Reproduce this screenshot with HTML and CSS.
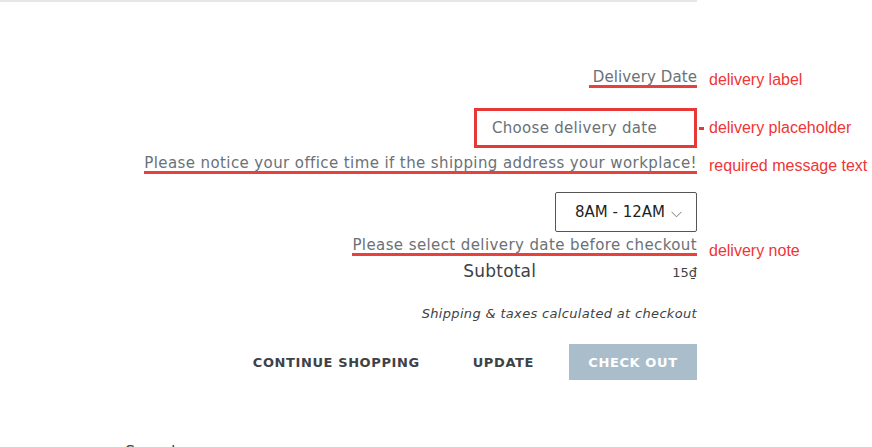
FILE: index.html
```html
<!DOCTYPE html>
<html lang="en">
<head>
<meta charset="utf-8">
<title>Cart</title>
<link rel="stylesheet" href="styles.css">
</head>
<body>
<div class="topline"></div>
<div class="cart">
  <div class="row row-label">
    <div class="cell"><span class="mark mark-pad">Delivery Date</span></div>
    <div class="ann ann-low">delivery label</div>
  </div>
  <div class="row row-date">
    <div class="cell"><div class="date-box">Choose delivery date</div></div>
    <div class="ann"><span class="dash"></span>delivery placeholder</div>
  </div>
  <div class="row row-notice">
    <div class="cell"><span class="mark">Please notice your office time if the shipping address your workplace!</span></div>
    <div class="ann ann-low">required message text</div>
  </div>
  <div class="row row-select">
    <div class="cell">
      <div class="select">
        <span>8AM - 12AM</span>
        <svg class="chev" width="11" height="7" viewBox="0 0 11 7"><path d="M0.5 0.8 L5.5 5.8 L10.5 0.8" fill="none" stroke="#777" stroke-width="1"/></svg>
      </div>
    </div>
    <div class="ann"></div>
  </div>
  <div class="row row-note">
    <div class="cell"><span class="mark">Please select delivery date before checkout</span></div>
    <div class="ann ann-end">delivery note</div>
  </div>
  <div class="row row-subtotal">
    <div class="cell subtotal">
      <span class="sub-label">Subtotal</span>
      <span class="sub-price">15₫</span>
    </div>
  </div>
  <div class="row row-ship">
    <div class="cell"><span class="ship">Shipping &amp; taxes calculated at checkout</span></div>
  </div>
  <div class="row row-buttons">
    <div class="cell actions">
      <button class="btn btn-link">Continue shopping</button>
      <button class="btn btn-link">Update</button>
      <button class="btn btn-primary">Check out</button>
    </div>
  </div>
  <div class="footer-text">Sound</div>
</div>
</body>
</html>
```

FILE: styles.css
```css
html, body {
  margin: 0;
  padding: 0;
  background: #fff;
}
body {
  width: 872px;
  height: 447px;
  overflow: hidden;
  font-family: "DejaVu Sans", sans-serif;
  color: #6b7177;
}
.topline {
  width: 697px;
  height: 2px;
  background: #e6e6e6;
}
.row {
  display: grid;
  grid-template-columns: 697px 1fr;
  align-items: center;
}
.cell {
  display: flex;
  justify-content: flex-end;
  align-items: center;
}
.ann {
  display: flex;
  align-items: center;
  padding-left: 12px;
  font-family: "Liberation Sans", Arial, sans-serif;
  font-size: 16px;
  line-height: 16px;
  color: #ee3636;
  white-space: nowrap;
}
.ann-low { padding-top: 3px; }
.ann-end {
  align-self: end;
  margin-bottom: -3px;
}
.mark {
  display: inline-block;
  font-size: 15px;
  line-height: 16px;
  letter-spacing: 0.4px;
  border-bottom: 3px solid #e8403d;
  color: #6b7177;
  white-space: nowrap;
}
.mark-pad {
  padding-left: 4px;
  letter-spacing: 0.1px;
}

.row-label { margin-top: 67px; }

.row-date { margin-top: 20px; }
.date-box {
  box-sizing: border-box;
  width: 223px;
  height: 40px;
  border: 3px solid #e53935;
  padding-left: 15px;
  display: flex;
  align-items: center;
  font-size: 15px;
  letter-spacing: 0.3px;
  color: #6b7177;
}
.dash {
  display: inline-block;
  width: 5px;
  height: 3px;
  background: #e53935;
  margin-left: -10px;
  margin-right: 5px;
}

.row-notice { margin-top: 7px; }

.row-select { margin-top: 18px; }
.select {
  box-sizing: border-box;
  width: 142px;
  height: 40px;
  border: 1px solid #555;
  border-radius: 2px;
  display: flex;
  align-items: center;
  padding-left: 19px;
  gap: 6px;
  font-size: 15px;
  color: #1f1f1f;
}
.chev { margin-top: 4px; }

.row-note { margin-top: 5px; }

.row-subtotal { margin-top: 5px; }
.subtotal {
  align-items: baseline;
  gap: 136px;
  color: #3d4246;
}
.sub-label {
  font-size: 17px;
  line-height: 20px;
  letter-spacing: 0.2px;
}
.sub-price {
  font-size: 13px;
  line-height: 20px;
}

.row-ship { margin-top: 23px; }
.ship {
  font-size: 13px;
  line-height: 16px;
  letter-spacing: 0.33px;
  font-style: italic;
  color: #3d4246;
}

.row-buttons { margin-top: 22px; }
.actions { gap: 17px; }
.btn {
  font-family: "DejaVu Sans", sans-serif;
  font-weight: bold;
  font-size: 13px;
  letter-spacing: 0.6px;
  text-transform: uppercase;
  border: 0;
  height: 36px;
  padding: 0 18px;
  margin: 0;
  background: transparent;
  color: #3d4246;
}
.btn-primary {
  background: #a9bdcb;
  color: #fff;
  width: 128px;
  padding: 0;
}
.footer-text {
  margin-top: 62px;
  padding-left: 125px;
  font-size: 16px;
  line-height: 20px;
  color: #3d4246;
}
```
